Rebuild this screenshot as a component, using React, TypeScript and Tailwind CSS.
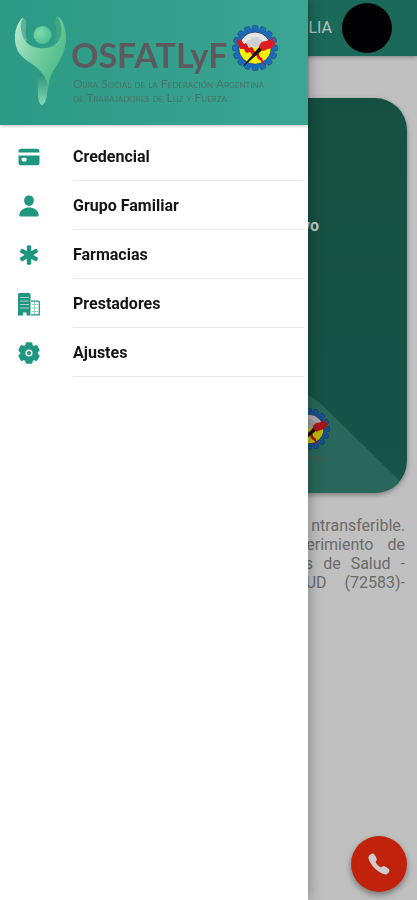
import React from "react";
import { IoCard, IoPerson, IoMedical, IoCall } from "react-icons/io5";

function BuildingIcon({ className }: { className?: string }) {
  return (
    <svg viewBox="0 0 24 24" className={className} aria-hidden="true">
      <path fill="currentColor" d="M2.500 1H12q1.500 0 1.500 1.500V23.500H9.500V20.500H6V23.500H1V2.500Q1 1 2.500 1Z" />
      <path stroke="#b5ddd5" strokeWidth="0.9" d="M3 5.500H12M3 9H12M3 12.500H12M3 16H12" />
      <path fill="none" stroke="currentColor" strokeWidth="1.200" d="M14 9.100H21.500Q22.300 9.100 22.300 10V22.900H14" />
      <path stroke="#8fcdc0" strokeWidth="0.9" d="M15 12.500H21.500M15 16H21.500M15 19.500H21.500M17.500 10V22" />
    </svg>
  );
}

function GearIcon({ className }: { className?: string }) {
  return (
    <svg viewBox="0 0 24 24" className={className} aria-hidden="true">
      <g fill="currentColor">
        <circle cx="12" cy="12" r="8.800" />
        {[0, 60, 120, 180, 240, 300].map((a) => (
          <rect key={a} x="8.500" y="1.200" width="7" height="7" rx="1.500" transform={`rotate(${a} 12 12)`} />
        ))}
      </g>
      <circle cx="12" cy="12" r="2.800" fill="none" stroke="#fff" strokeWidth="1.500" />
    </svg>
  );
}

const items = [
  { label: "Credencial", Icon: IoCard },
  { label: "Grupo Familiar", Icon: IoPerson },
  { label: "Farmacias", Icon: IoMedical },
  { label: "Prestadores", Icon: BuildingIcon },
  { label: "Ajustes", Icon: GearIcon },
];

const teeth = Array.from({ length: 16 }, (_, i) => i * 22.5);

function Emblem({ className, id }: { className: string; id: string }) {
  return (
    <svg viewBox="0 0 48 48" className={className} aria-hidden="true">
      <g fill="#1e6fc0" stroke="#123d78" strokeWidth="0.6">
        {teeth.map((a) => (
          <rect key={a} x="21.300" y="1.500" width="5.400" height="6" rx="1.500" transform={`rotate(${a} 24 24)`} />
        ))}
      </g>
      <circle cx="24" cy="24" r="20" fill="#1c69b8" />
      <circle cx="24" cy="24" r="16" fill="#e4e4e6" stroke="#1a2c4c" strokeWidth="0.8" />
      <clipPath id={id}>
        <circle cx="24" cy="24" r="15.600" />
      </clipPath>
      <g clipPath={`url(#${id})`}>
        <path d="M8 23.500H40V42H8Z" fill="#fbf300" />
        <path d="M14 23q0-7 5-7q5-6 10-1q5 1 5 8z" fill="#cfcfd2" />
      </g>
      <path d="M5 15L8.500 17L9.500 15.500L13 20L15 19L18 24L21 23L24 28L27 28L29 33L31 34L34 42L29 36L27 35L25 31L22 32L19 28L15 29L13 25L9 25L7 20Z" fill="#d8151c" />
      <path d="M11 43L29 22L32.500 25L14 41Z" fill="#17120f" />
      <path d="M28 23Q29 17 35 17L43 14L41 18L45 17Q43 25 37 25L32 27Z" fill="#e01c20" />
    </svg>
  );
}

function Figure() {
  return (
    <svg viewBox="0 0 52 90" className="h-[90px] w-[52px] shrink-0" aria-hidden="true">
      <defs>
        <linearGradient id="body" x1="0" y1="0" x2="1" y2="0.6">
          <stop offset="0" stopColor="#c0ebd5" />
          <stop offset="0.5" stopColor="#79d1a4" />
          <stop offset="1" stopColor="#4cba89" />
        </linearGradient>
        <linearGradient id="leg" x1="0" y1="0" x2="0" y2="1">
          <stop offset="0" stopColor="#2c9478" />
          <stop offset="1" stopColor="#82d9b2" />
        </linearGradient>
        <radialGradient id="head" cx="0.35" cy="0.35" r="0.75">
          <stop offset="0" stopColor="#7fdcae" />
          <stop offset="1" stopColor="#4cbd8b" />
        </radialGradient>
      </defs>
      <path d="M7 2Q12 2 11 10Q10 17 12 25L7 24Q3 12 7 2Z" fill="#5bb294" />
      <path d="M42 0Q39 3 41 11Q43 18 40 26L46 23Q49 8 42 0Z" fill="#3fa680" />
      <path d="M25 58Q22 66 23 80Q24 89 27 89Q31 88 32 78Q33 70 35 66Z" fill="url(#leg)" />
      <path d="M7 2C-2 12-2 28 4 37C11 46 20 48 27 57Q32 63 33 71Q34 61 40 52C49 39 53 26 50 13Q48 3 42 0Q49 11 45 22C41 31 32 33 24 32C12 31 7 22 6 13Q5 6 8 2Z" fill="url(#body)" />
      <circle cx="27.500" cy="19" r="9" fill="url(#head)" />
    </svg>
  );
}

function Page() {
  return (
    <div className="min-h-screen bg-[#c0c0c0]">
      <header className="flex h-14 items-center justify-end gap-2.5 bg-[#1b6958] pr-[25px] shadow-[0_1px_4px_rgba(0,0,0,0.35)]">
        <span className="text-base text-[#b5c4c0]">LIA</span>
        <span className="size-[50px] rounded-full bg-[#010104]" />
      </header>
      <main className="px-2.5 pt-[42px]">
        <section className="relative h-[395px] overflow-hidden rounded-[32px] bg-gradient-to-b from-[#155040] to-[#175347] shadow-[0_2px_5px_rgba(0,0,0,0.35)]">
          <svg className="absolute right-0 bottom-0 h-[110px] w-[120px]" viewBox="0 0 120 110" aria-hidden="true">
            <path d="M0 5Q20 8 34 21L112 97V110H0Z" fill="#28675a" />
          </svg>
          <p className="relative pt-[118px] pr-[88px] text-right text-base leading-5 font-bold text-[#bccac5]">Activo</p>
          <div className="absolute right-[76px] bottom-[42px]">
            <Emblem id="emblem-card" className="size-[44px] brightness-75" />
          </div>
          <p className="absolute right-[82px] bottom-[29px] text-[8px] leading-[10px] text-[#4a5a50] [font-variant-caps:small-caps]">
            Argentina
          </p>
        </section>
        <div className="flex flex-col pt-[23px] pr-0.5 text-base leading-[19px] text-[#6a6a6a]">
          <p className="flex justify-end">ntransferible.</p>
          <p className="flex justify-end gap-3.5"><span>requerimiento</span><span>de</span></p>
          <p className="flex justify-end gap-2.5"><span>Obras</span><span>de</span><span>Salud</span><span>-</span></p>
          <p className="flex justify-end gap-[18px]"><span>SALUD</span><span>(72583)-</span></p>
        </div>
      </main>
    </div>
  );
}

export default function App() {
  return (
    <div className="relative min-h-screen overflow-hidden font-['Roboto',sans-serif]">
      <Page />
      <button
        type="button"
        aria-label="Llamar"
        className="fixed right-2.5 bottom-2 grid size-14 place-items-center rounded-full bg-[#c0220c] text-[#d0cccc] shadow-[0_3px_6px_rgba(0,0,0,0.4)]"
      >
        <IoCall className="size-6" />
      </button>
      <aside className="fixed inset-y-0 left-0 w-[308px] bg-white shadow-[0_0_14px_rgba(0,0,0,0.35)]">
        <div className="flex h-[125px] gap-1 bg-gradient-to-r from-[#2b9a85] to-[#3ca493] pt-4 pl-[15px] shadow-[0_1px_3px_rgba(0,0,0,0.25)]">
          <Figure />
          <div className="text-[#5d5a5e]">
            <div className="flex h-[61px] gap-1">
              <h1 className="pt-5 font-['Lato',sans-serif] text-[34px] leading-[38px] font-bold">OSFATLyF</h1>
              <Emblem id="emblem-logo" className="mt-2 size-[48px] shrink-0" />
            </div>
            <p className="pl-0.5 font-['Lato',sans-serif] text-[12px] leading-[14px] whitespace-nowrap text-[#47756b] [font-variant-caps:small-caps]">
              Obra Social de la Federación Argentina
              <br />
              de Trabajadores de Luz y Fuerza
            </p>
          </div>
        </div>
        <nav className="pt-[7px]">
          <ul>
            {items.map(({ label, Icon }) => (
              <li key={label}>
                <a href="#" className="flex h-[49px] items-center pr-1 pl-[17px]">
                  <Icon className="size-6 shrink-0 text-[#1f9780]" />
                  <span className="ml-8 flex h-full flex-1 items-center border-b border-[#e8e8e8] pt-0.5 text-base font-bold text-[#141414]">
                    {label}
                  </span>
                </a>
              </li>
            ))}
          </ul>
        </nav>
      </aside>
    </div>
  );
}
